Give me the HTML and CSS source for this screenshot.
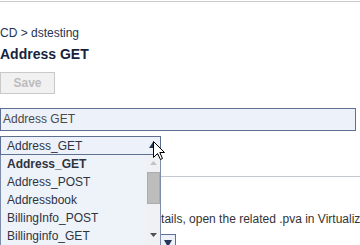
FILE: index.html
```html
<!DOCTYPE html>
<html>
<head>
<meta charset="utf-8">
<link rel="stylesheet" href="styles.css">
</head>
<body>
<div class="topline"></div>
<main class="page">
  <div class="crumb">CD &gt; dstesting</div>
  <h1 class="title">Address GET</h1>
  <button class="save" disabled>Save</button>
  <div class="field">Address GET</div>
  <div class="combo">
    <div class="select">
      <span>Address_GET</span>
      <svg class="arrow-up" width="8" height="6" viewBox="0 0 8 6"><polygon points="4,0 8,6 0,6" fill="#26375a"/></svg>
    </div>
    <div class="listbox">
      <ul class="opts">
        <li class="opt sel">Address_GET</li>
        <li class="opt">Address_POST</li>
        <li class="opt">Addressbook</li>
        <li class="opt">BillingInfo_POST</li>
        <li class="opt">Billinginfo_GET</li>
      </ul>
      <div class="sb">
        <div class="sb-btn"><svg width="7" height="4" viewBox="0 0 7 4"><polygon points="3.5,0 7,4 0,4" fill="#c3c3c3"/></svg></div>
        <div class="thumb"></div>
        <div class="sb-btn sb-down"><svg width="7" height="4" viewBox="0 0 7 4"><polygon points="0,0 7,0 3.5,4" fill="#505050"/></svg></div>
      </div>
    </div>
  </div>
  <hr class="divider">
  <p class="note">To view the full response details, open the related .pva in Virtualize.</p>
  <div class="select2">
    <span class="s2-btn"><svg width="8" height="7" viewBox="0 0 8 7"><polygon points="0,0 8,0 4,7" fill="#26375a"/></svg></span>
  </div>
</main>
<svg class="cursor" width="13" height="20" viewBox="0 0 13 20"><path d="M0.5,0.5 L0.5,16.5 L4.5,12.5 L7.5,18.5 L9.5,17.5 L6.8,11.5 L11.5,11.5 Z" fill="#fff" stroke="#000" stroke-width="1" stroke-linejoin="miter"/></svg>
</body>
</html>
```
FILE: styles.css
```css
html, body {
  margin: 0;
  padding: 0;
  width: 360px;
  height: 245px;
  overflow: hidden;
  background: #fff;
  font-family: "Liberation Sans", Arial, sans-serif;
}
.topline {
  margin-top: 1px;
  height: 1px;
  background: #cbcbcb;
}
.page {
  display: flex;
  flex-direction: column;
  align-items: flex-start;
}
.crumb {
  margin-top: 24px;
  font-size: 12px;
  line-height: 14px;
  color: #243352;
}
.title {
  margin: 6px 0 0;
  font-size: 14px;
  line-height: 17px;
  font-weight: bold;
  color: #16233d;
}
.save {
  margin: 9px 0 0;
  width: 55px;
  height: 22px;
  padding: 0;
  border: 1px solid #c9c9c9;
  background: #f1f1f1;
  color: #bcbcbc;
  font-family: "Liberation Sans", Arial, sans-serif;
  font-size: 12px;
  font-weight: bold;
  line-height: 20px;
}
.field {
  margin-top: 14px;
  width: 356px;
  height: 23px;
  box-sizing: border-box;
  border: 1px solid #5f6f92;
  background: #edf1f9;
  padding-left: 2px;
  font-size: 12px;
  line-height: 21px;
  color: #4a4a4a;
}
.combo {
  margin-top: 5px;
  position: relative;
  width: 161px;
  z-index: 2;
}
.select {
  height: 19px;
  box-sizing: border-box;
  border: 1px solid #5f6f92;
  background: #edf1f9;
  display: flex;
  align-items: center;
  justify-content: space-between;
  padding: 0 3px 0 6px;
  font-size: 12px;
  color: #2f3441;
}
.arrow-up {
  margin-top: -2px;
}
.listbox {
  position: absolute;
  top: 19px;
  left: 0;
  width: 161px;
  height: 91px;
  box-sizing: border-box;
  border: 1px solid #7d8cab;
  border-top: none;
  background: #eef2f9;
  display: flex;
}
.opts {
  flex: 1;
  margin: 0;
  padding: 0;
  list-style: none;
  overflow: hidden;
}
.opt {
  height: 18px;
  line-height: 18px;
  padding-left: 6px;
  font-size: 12px;
  color: #2f3441;
  white-space: nowrap;
}
.opt.sel {
  font-weight: bold;
}
.sb {
  width: 14px;
  display: flex;
  flex-direction: column;
  align-items: center;
  background: #eff1f5;
}
.sb-btn {
  height: 15px;
  width: 14px;
  display: flex;
  align-items: center;
  justify-content: center;
}
.sb-btn svg {
  display: block;
}
.thumb {
  margin-top: 2px;
  width: 11px;
  height: 30px;
  background: #bdbdbd;
  border: 1px solid #ababab;
}
.sb-down {
  margin-top: auto;
  margin-bottom: 3px;
}
.divider {
  margin: 21px 0 0;
  border: 0;
  height: 1px;
  width: 360px;
  background: #c5cad2;
}
.note {
  margin: 35px 0 0;
  padding-left: 13px;
  font-size: 12px;
  line-height: 14px;
  color: #333;
  white-space: nowrap;
}
.select2 {
  margin-top: 8px;
  width: 176px;
  height: 19px;
  box-sizing: border-box;
  border: 1px solid #5f6f92;
  background: #edf1f9;
  display: flex;
  justify-content: flex-end;
}
.s2-btn {
  width: 14px;
  border-left: 1px solid #5f6f92;
  display: flex;
  align-items: center;
  justify-content: center;
}
.s2-btn svg {
  display: block;
}
.cursor {
  position: absolute;
  left: 153px;
  top: 141px;
  z-index: 5;
}
```
